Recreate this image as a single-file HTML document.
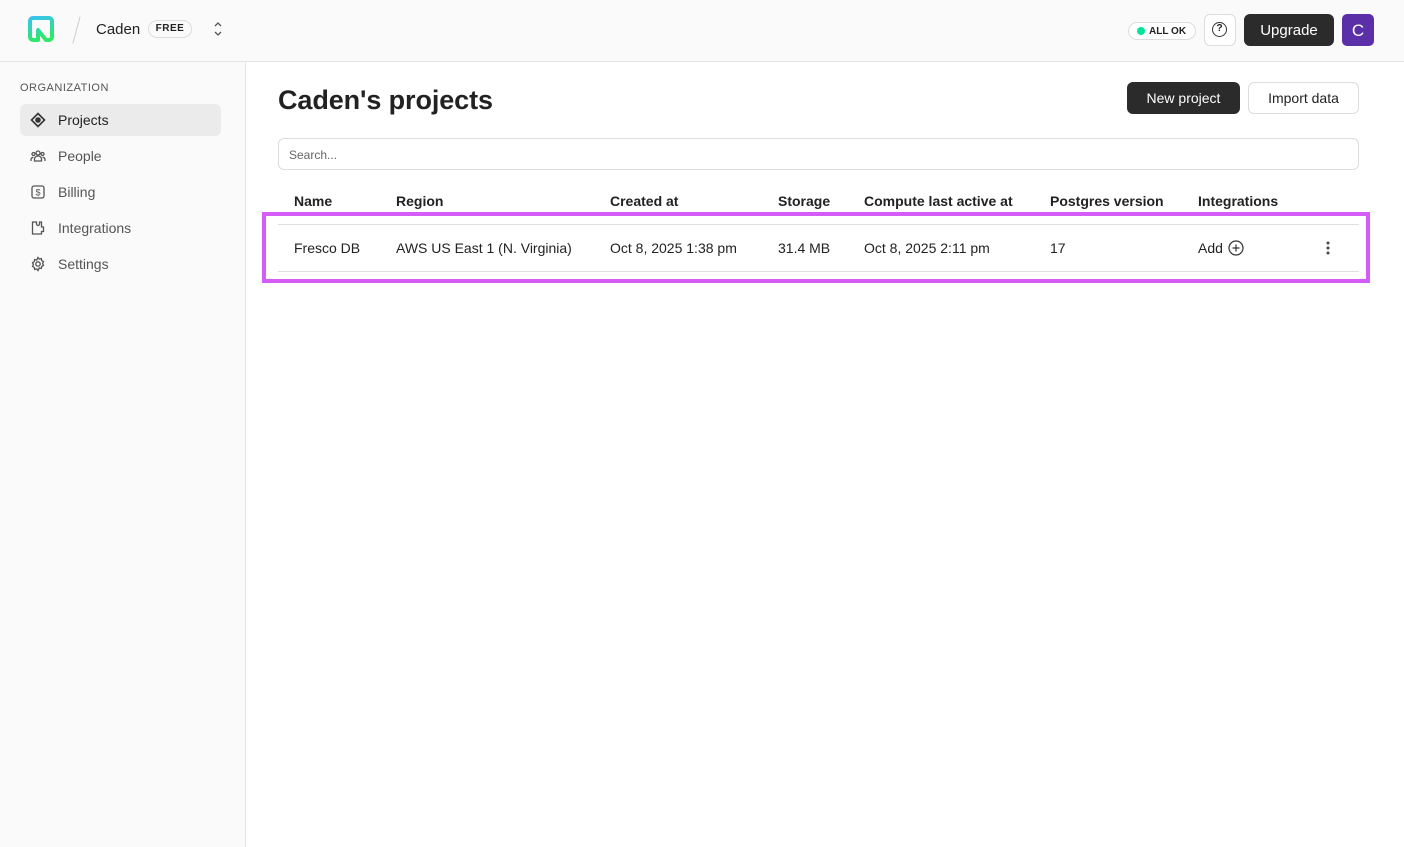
<!DOCTYPE html>
<html><head><style>
*{box-sizing:border-box;margin:0;padding:0}
body{width:1404px;height:847px;background:#fff;font-family:"Liberation Sans",sans-serif;color:#222;position:relative;overflow:hidden;font-size:14px}
.top{position:absolute;left:0;top:0;width:1404px;height:62px;background:#fafafa;border-bottom:1px solid #e4e4e4}
.side{position:absolute;left:0;top:62px;width:246px;height:785px;background:#fafafa;border-right:1px solid #e4e4e4}
.abs{position:absolute}
.nav{position:absolute;left:20px;width:201px;height:32px;border-radius:6px;font-size:14px;color:#555;line-height:32px;padding-left:38px}
.nav svg{position:absolute;left:10px;top:8px}
.btn{position:absolute;border-radius:6px;font-size:14px;line-height:32px;text-align:center}
.th{position:absolute;top:193px;font-weight:bold;font-size:14px;color:#222}
.td{position:absolute;top:240px;font-size:14px;color:#222}
</style></head><body>
<div class="top"></div>
<svg class="abs" style="left:28px;top:16px" width="26" height="26" viewBox="0 0 26 26"><defs><linearGradient id="g" x1="0" y1="0" x2="0.3" y2="1"><stop offset="0" stop-color="#37c2ef"/><stop offset="1" stop-color="#2ee86a"/></linearGradient></defs><path d="M2 5a3 3 0 0 1 3-3h16a3 3 0 0 1 3 3v16a3 3 0 0 1-3 3h-3l-8-10v10H5a3 3 0 0 1-3-3z" fill="none" stroke="url(#g)" stroke-width="4" stroke-linejoin="round"/></svg>
<div class="abs" style="left:76px;top:16px;width:1px;height:28px;background:#ccc;transform:rotate(15deg)"></div>
<div class="abs" style="left:96px;top:21px;font-size:15px">Caden</div>
<div class="abs" style="left:148px;top:20px;height:18px;width:44px;border:1px solid #ddd;border-radius:9px;font-size:10px;font-weight:bold;text-align:center;line-height:16px;letter-spacing:.5px">FREE</div>
<svg class="abs" style="left:212px;top:20px" width="12" height="18" viewBox="0 0 12 18" fill="none" stroke="#555" stroke-width="1.3"><path d="M3 6l3-3 3 3M3 12l3 3 3-3"/></svg>
<div class="abs" style="left:1128px;top:22px;width:68px;height:18px;border:1px solid #ddd;border-radius:9px;background:#fff;font-size:10px;font-weight:bold;line-height:17px;padding-left:20px">ALL OK</div>
<div class="abs" style="left:1137px;top:27px;width:8px;height:8px;border-radius:50%;background:#00e59a"></div>
<div class="abs" style="left:1204px;top:14px;width:32px;height:32px;border:1px solid #ddd;border-radius:6px;background:#fff"></div>
<div class="abs" style="left:1212px;top:22px;width:15px;height:15px;border:1.5px solid #333;border-radius:50%;font-size:10px;font-weight:bold;text-align:center;line-height:12px">?</div>
<div class="btn" style="left:1244px;top:14px;width:90px;height:32px;background:#2b2b2b;color:#fff;font-size:15px;line-height:33px">Upgrade</div>
<div class="abs" style="left:1342px;top:14px;width:32px;height:32px;background:#5a2fa8;border-radius:5px;color:#fff;font-size:17px;text-align:center;line-height:33px">C</div>
<div class="side"></div>
<div class="abs" style="left:20px;top:82px;font-size:11px;color:#555;letter-spacing:.5px">ORGANIZATION</div>
<div class="nav" style="top:104px;background:#ebebeb;color:#222">Projects<svg width="16" height="16" viewBox="0 0 16 16" fill="none" stroke="#333" stroke-width="1.6"><path d="M8 1.5L14.5 8 8 14.5 1.5 8z"/><circle cx="8" cy="8" r="2" fill="#333"/></svg></div>
<div class="nav" style="top:140px">People<svg width="16" height="16" viewBox="0 0 16 16" fill="none" stroke="#555" stroke-width="1.3"><circle cx="8" cy="5" r="2"/><circle cx="3.5" cy="6" r="1.5"/><circle cx="12.5" cy="6" r="1.5"/><path d="M4.5 13v-2a3.5 3 0 0 1 7 0v2zM1 13v-1.5a2 2 0 0 1 2.5-2M15 13v-1.5a2 2 0 0 0-2.5-2"/></svg></div>
<div class="nav" style="top:176px">Billing<svg width="16" height="16" viewBox="0 0 16 16" fill="none" stroke="#555" stroke-width="1.3"><rect x="2" y="2" width="12" height="12" rx="2"/><text x="8" y="11.5" font-size="9" text-anchor="middle" fill="#555" stroke="none" font-family="Liberation Sans">$</text></svg></div>
<div class="nav" style="top:212px">Integrations<svg width="16" height="16" viewBox="0 0 16 16" fill="none" stroke="#555" stroke-width="1.3"><path d="M2.5 2h4v2a1.5 1.5 0 0 0 3 0V2h2v5h2v4.5h-2V14h-9z"/></svg></div>
<div class="nav" style="top:248px">Settings<svg width="16" height="16" viewBox="0 0 16 16" fill="none" stroke="#555" stroke-width="1.3"><circle cx="8" cy="8" r="2.2"/><path d="M8 1.5l1.3 1.6 2-.5.5 2 1.7 1.1-.9 1.8.9 1.8-1.7 1.1-.5 2-2-.5L8 14.5l-1.3-1.6-2 .5-.5-2-1.7-1.1.9-1.8-.9-1.8 1.7-1.1.5-2 2 .5z"/></svg></div>
<div class="abs" style="left:278px;top:85px;font-size:27px;font-weight:bold;color:#222;letter-spacing:-.1px">Caden's projects</div>
<div class="btn" style="left:1127px;top:82px;width:113px;height:32px;background:#2b2b2b;color:#fff">New project</div>
<div class="btn" style="left:1248px;top:82px;width:111px;height:32px;border:1px solid #ddd;background:#fff;line-height:30px">Import data</div>
<div class="abs" style="left:278px;top:138px;width:1081px;height:32px;border:1px solid #ddd;border-radius:6px;font-size:12px;color:#666;line-height:32px;padding-left:10px">Search...</div>
<div class="th" style="left:294px">Name</div>
<div class="th" style="left:396px">Region</div>
<div class="th" style="left:610px">Created at</div>
<div class="th" style="left:778px">Storage</div>
<div class="th" style="left:864px">Compute last active at</div>
<div class="th" style="left:1050px">Postgres version</div>
<div class="th" style="left:1198px">Integrations</div>
<div class="abs" style="left:278px;top:224px;width:1081px;height:1px;background:#e0e0e0"></div>
<div class="abs" style="left:278px;top:271px;width:1081px;height:1px;background:#e0e0e0"></div>
<div class="td" style="left:294px">Fresco DB</div>
<div class="td" style="left:396px">AWS US East 1 (N. Virginia)</div>
<div class="td" style="left:610px">Oct 8, 2025 1:38 pm</div>
<div class="td" style="left:778px">31.4 MB</div>
<div class="td" style="left:864px">Oct 8, 2025 2:11 pm</div>
<div class="td" style="left:1050px">17</div>
<div class="td" style="left:1198px">Add</div>
<svg class="abs" style="left:1228px;top:240px" width="16" height="16" viewBox="0 0 16 16" fill="none" stroke="#333" stroke-width="1.2"><circle cx="8" cy="8" r="7"/><path d="M8 4.5v7M4.5 8h7"/></svg>
<svg class="abs" style="left:1325px;top:240px" width="6" height="16"><circle cx="3" cy="3" r="1.5" fill="#444"/><circle cx="3" cy="8" r="1.5" fill="#444"/><circle cx="3" cy="13" r="1.5" fill="#444"/></svg>
<div class="abs" style="left:262px;top:212px;width:1108px;height:71px;border:4px solid #d65cf7"></div>
</body></html>
